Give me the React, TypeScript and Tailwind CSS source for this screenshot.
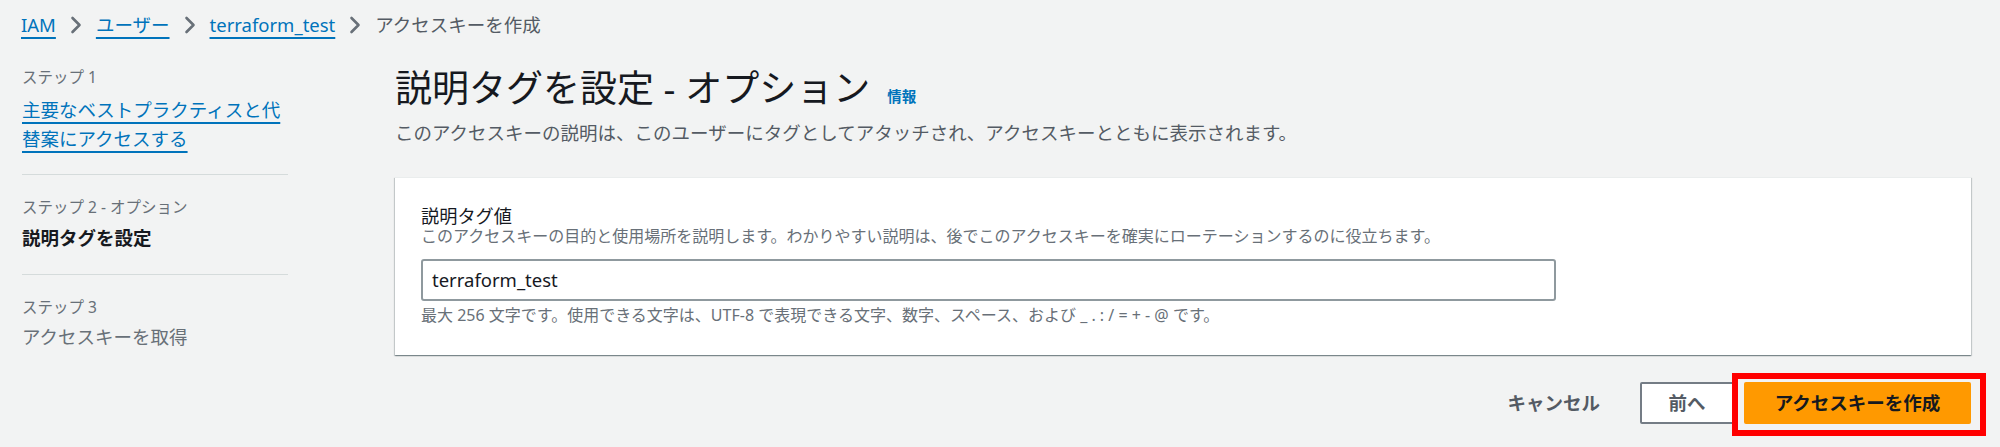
import React from "react";

function Chevron() {
  return (
    <svg width="16" height="18" viewBox="0 0 16 18" className="shrink-0">
      <path d="M4.5 2 L11.5 9 L4.5 16" fill="none" stroke="#687078" strokeWidth="2.6" strokeLinecap="round" strokeLinejoin="round" />
    </svg>
  );
}

export default function App() {
  return (
    <div className="w-[2000px] h-[447px] overflow-hidden bg-[#f2f3f3] font-['Noto_Sans','Noto_Sans_CJK_JP',sans-serif] text-[#16191f]">
      <nav className="flex items-center gap-[12px] pl-[21px] pt-[13px] text-[18.5px] leading-[24px]">
        <a className="text-[#0073bb] underline underline-offset-[5px] decoration-[1.5px]">IAM</a>
        <Chevron />
        <a className="text-[#0073bb] underline underline-offset-[5px] decoration-[1.5px]">ユーザー</a>
        <Chevron />
        <a className="text-[#0073bb] underline underline-offset-[5px] decoration-[1.5px]">terraform_test</a>
        <Chevron />
        <span className="text-[#545b64]">アクセスキーを作成</span>
      </nav>

      <div className="flex">
        <aside className="ml-[22px] w-[266px] shrink-0">
          <div className="mt-[30px] text-[15.5px] leading-[20px] text-[#687078]">ステップ 1</div>
          <a className="block mt-[8px] text-[18.5px] leading-[29px] text-[#0073bb] underline underline-offset-[5px] decoration-[1.5px]">
            主要なベストプラクティスと代替案にアクセスする
          </a>
          <div className="mt-[21px] h-px bg-[#d5dbdb]" />
          <div className="mt-[22px] text-[15.5px] leading-[20px] text-[#687078]">ステップ 2 - オプション</div>
          <div className="mt-[9px] text-[18.5px] leading-[24px] font-bold text-[#16191f]">説明タグを設定</div>
          <div className="mt-[24px] h-px bg-[#d5dbdb]" />
          <div className="mt-[22px] text-[15.5px] leading-[20px] text-[#687078]">ステップ 3</div>
          <div className="mt-[8px] text-[18.5px] leading-[24px] text-[#687078]">アクセスキーを取得</div>
        </aside>

        <main className="ml-[107px] w-[1576px] shrink-0">
          <div className="mt-[29px] flex items-baseline gap-[17px]">
            <h1 className="text-[37px] leading-[44px] font-normal text-[#16191f]">説明タグを設定 - オプション</h1>
            <a className="text-[14.5px] font-bold text-[#0073bb]">情報</a>
          </div>
          <p className="mt-[11px] text-[18.5px] leading-[24px] text-[#545b64]">
            このアクセスキーの説明は、このユーザーにタグとしてアタッチされ、アクセスキーとともに表示されます。
          </p>

          <section className="mt-[32px] bg-white border-t border-[#eaeded] px-[26px] pt-[28px] pb-[30px] shadow-[0_1px_1px_0_rgba(0,28,36,0.3),1px_1px_1px_0_rgba(0,28,36,0.15),-1px_1px_1px_0_rgba(0,28,36,0.15)]">
            <div className="text-[18.2px] leading-[20px] text-[#16191f]">説明タグ値</div>
            <div className="text-[16px] leading-[20px] text-[#687078]">
              このアクセスキーの目的と使用場所を説明します。わかりやすい説明は、後でこのアクセスキーを確実にローテーションするのに役立ちます。
            </div>
            <div className="mt-[13px] w-[1135px] h-[42px] flex items-center border-2 border-[#8f999e] rounded-[3px] bg-white pl-[9px] text-[18.5px] text-[#16191f]">
              terraform_test
            </div>
            <div className="mt-[4px] text-[16px] leading-[20px] text-[#687078]">
              最大 256 文字です。使用できる文字は、UTF-8 で表現できる文字、数字、スペース、および _ . : / = + - @ です。
            </div>
          </section>

          <div className="mt-[27px] flex items-center justify-end">
            <button className="mr-[40px] text-[18.5px] font-bold text-[#545b64]">キャンセル</button>
            <button className="h-[42px] w-[94px] flex items-center justify-center border-2 border-[#747c85] rounded-[2px] bg-white text-[18.5px] font-bold text-[#545b64]">
              前へ
            </button>
            <div className="relative ml-[10px]">
              <button className="h-[42px] w-[227px] flex items-center justify-center rounded-[2px] bg-[#ff9900] text-[18.5px] font-bold text-[#16191f]">
                アクセスキーを作成
              </button>
              <div className="absolute left-[-12px] right-[-15px] top-[-9px] bottom-[-12px] border-[6px] border-[#ff0000]" />
            </div>
          </div>
        </main>
      </div>
    </div>
  );
}
